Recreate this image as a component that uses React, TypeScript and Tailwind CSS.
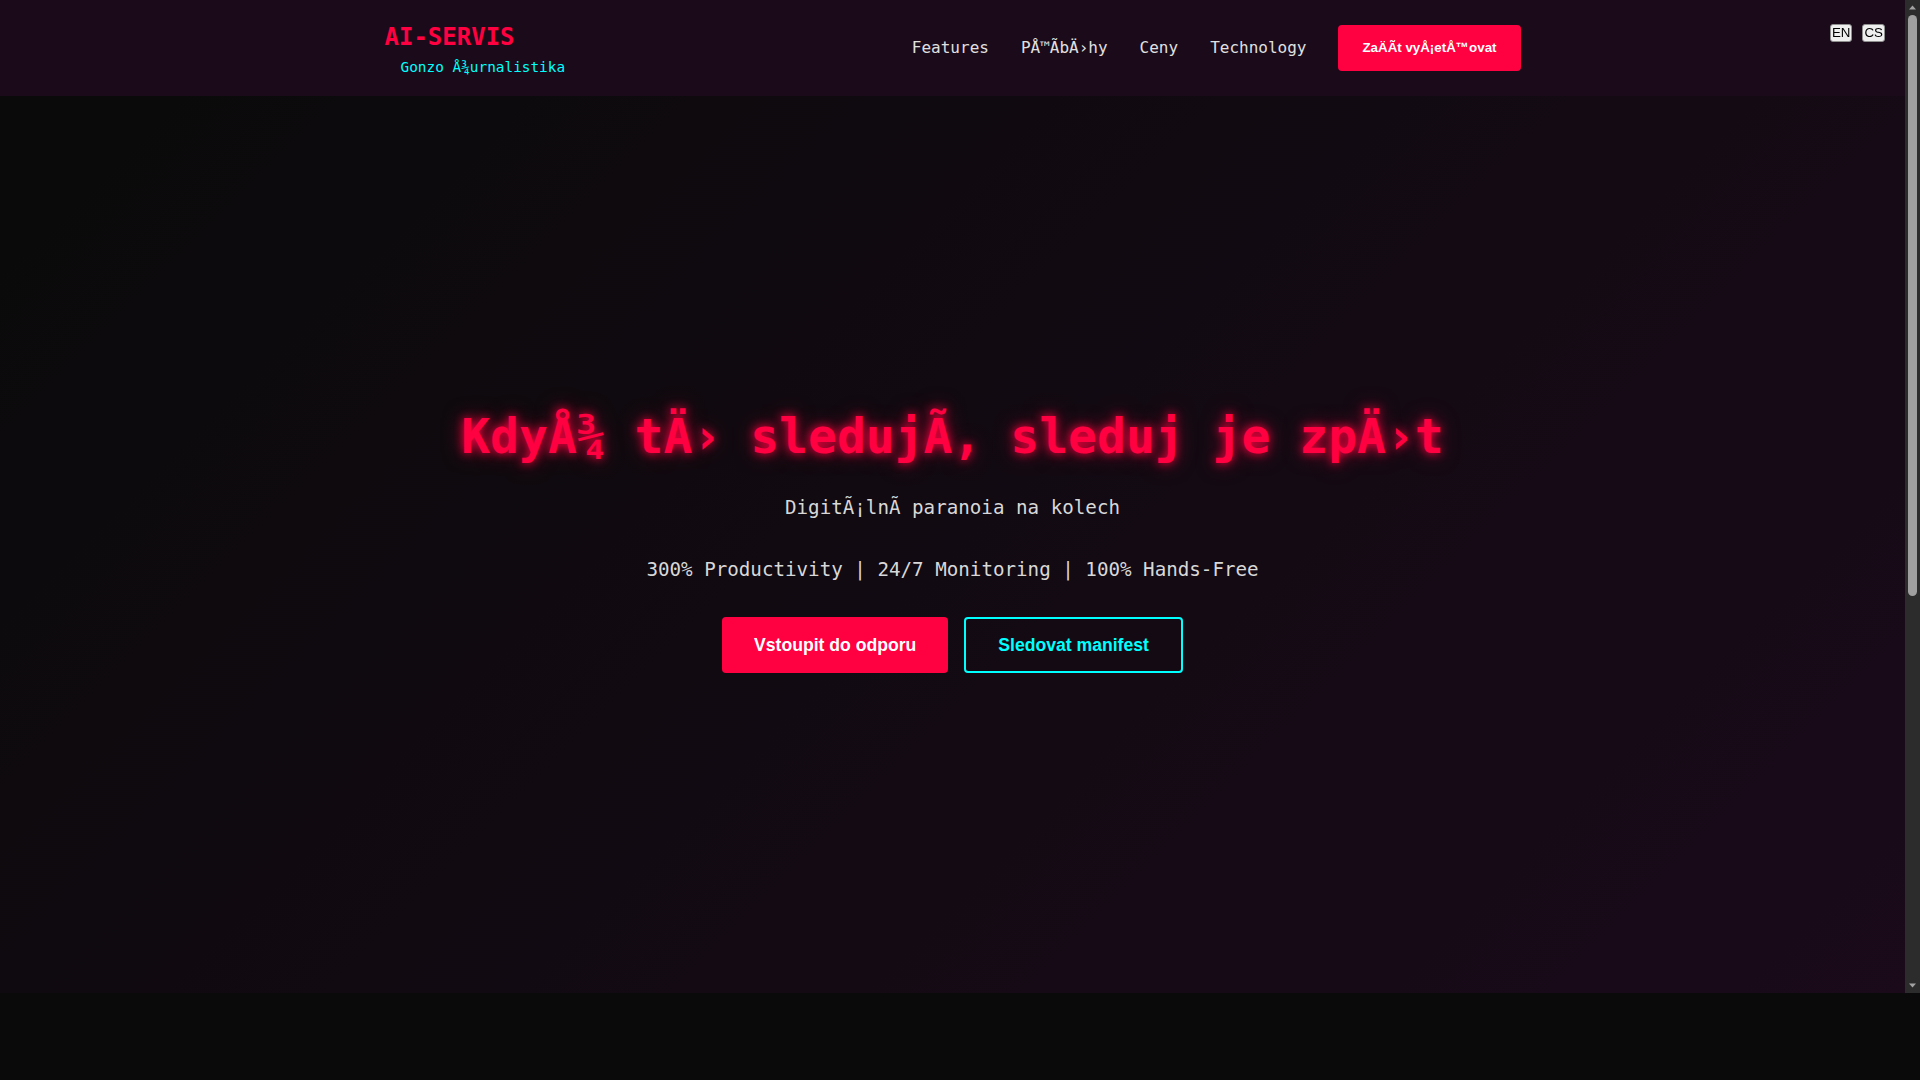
import React from "react"

const mono = "font-['DejaVu_Sans_Mono',monospace]"
const sans = "font-['Liberation_Sans',Arial,sans-serif]"

// the source page serves its Czech strings with a broken encoding; kept as shown
const navLinks = ["Features", "PÅ\u2122Ã\u00ADbÄ\u203Ahy", "Ceny", "Technology"]

function LangSwitch() {
  return (
    <div className={`fixed top-6 right-[35px] z-10 flex gap-2.5 ${sans}`}>
      {["EN", "CS"].map((lang) => (
        <button
          key={lang}
          className="bg-[#efefef] border border-[#8f8f8f] rounded-[3px] px-px text-[13.33px] leading-[16px] text-black"
        >
          {lang}
        </button>
      ))}
    </div>
  )
}

// classic browser scrollbar sitting over the right edge of the page
function ScrollBar() {
  return (
    <div className="fixed top-0 right-0 z-20 h-[993px] w-[15px] bg-[#2c2c2c] flex flex-col items-center">
      <svg width="15" height="15" viewBox="0 0 15 15" className="shrink-0">
        <path d="M4 9.5h7L7.5 5.5z" fill="#a3a3a3" />
      </svg>
      <div className="w-[9px] h-[581px] rounded-full bg-[#9f9f9f]" />
      <div className="flex-1" />
      <svg width="15" height="15" viewBox="0 0 15 15" className="shrink-0">
        <path d="M4 5.5h7L7.5 9.5z" fill="#a3a3a3" />
      </svg>
    </div>
  )
}

function Header() {
  return (
    <header className="bg-[#1a0a1a] h-[96px] flex items-center">
      <div className="w-full max-w-[1200px] mx-auto px-8 flex items-center justify-between">
        <div className={`flex flex-col pt-[5px] ${mono}`}>
          <span className="text-[24px] leading-[28.8px] font-bold text-[#ff0040]">AI-SERVIS</span>
          <span className="mt-[5px] ml-4 text-[14.4px] leading-[21.6px] text-[#00ffff]">
            Gonzo Å¾urnalistika
          </span>
        </div>

        <nav className="flex items-center gap-8">
          {navLinks.map((link) => (
            <a key={link} className={`${mono} text-[16px] text-[#e0e0e0]`}>
              {link}
            </a>
          ))}
          <button
            className={`${sans} bg-[#ff0040] text-white font-bold text-[13.33px] leading-[22px] px-6 py-3 rounded-[4px]`}
          >
            {"ZaÄÃ\u00ADt vyÅ¡etÅ\u2122ovat"}
          </button>
        </nav>
      </div>
    </header>
  )
}

function Hero() {
  return (
    <section className="h-[897px] pb-[9px] flex flex-col items-center justify-center bg-[linear-gradient(135deg,#0a0a0a_0%,#1a0a1a_100%)]">
      <h1
        className={`${mono} text-[48px] leading-[58px] font-bold text-[#ff0040] [text-shadow:0_0_10px_#ff0040,0_0_20px_rgba(255,0,64,0.5)]`}
      >
        {"KdyÅ¾ tÄ\u203A sledujÃ\u00AD, sleduj je zpÄ\u203At"}
      </h1>

      <p className={`${mono} mt-[28px] text-[19.2px] leading-[30.7px] text-[#d8d8d8]`}>
        {"DigitÃ¡lnÃ\u00AD paranoia na kolech"}
      </p>

      <p className={`${mono} mt-[31px] text-[19.2px] leading-[30.7px] text-[#d8d8d8]`}>
        300% Productivity | 24/7 Monitoring | 100% Hands-Free
      </p>

      <div className={`mt-[31.5px] flex gap-4 ${sans}`}>
        <button className="bg-[#ff0040] text-white font-bold text-[17.6px] leading-[1.15] px-8 py-4 rounded-[4px]">
          Vstoupit do odporu
        </button>
        <button className="border-2 border-[#00ffff] text-[#00ffff] font-bold text-[17.6px] leading-[1.15] px-8 py-4 rounded-[4px]">
          Sledovat manifest
        </button>
      </div>
    </section>
  )
}

export default function App() {
  return (
    <div className="bg-[#0a0a0a] min-h-screen">
      <LangSwitch />
      <ScrollBar />
      <div className="mr-[15px]">
        <Header />
        <Hero />
      </div>
      <section className="h-[960px] bg-[#0a0a0a]" />
    </div>
  )
}
